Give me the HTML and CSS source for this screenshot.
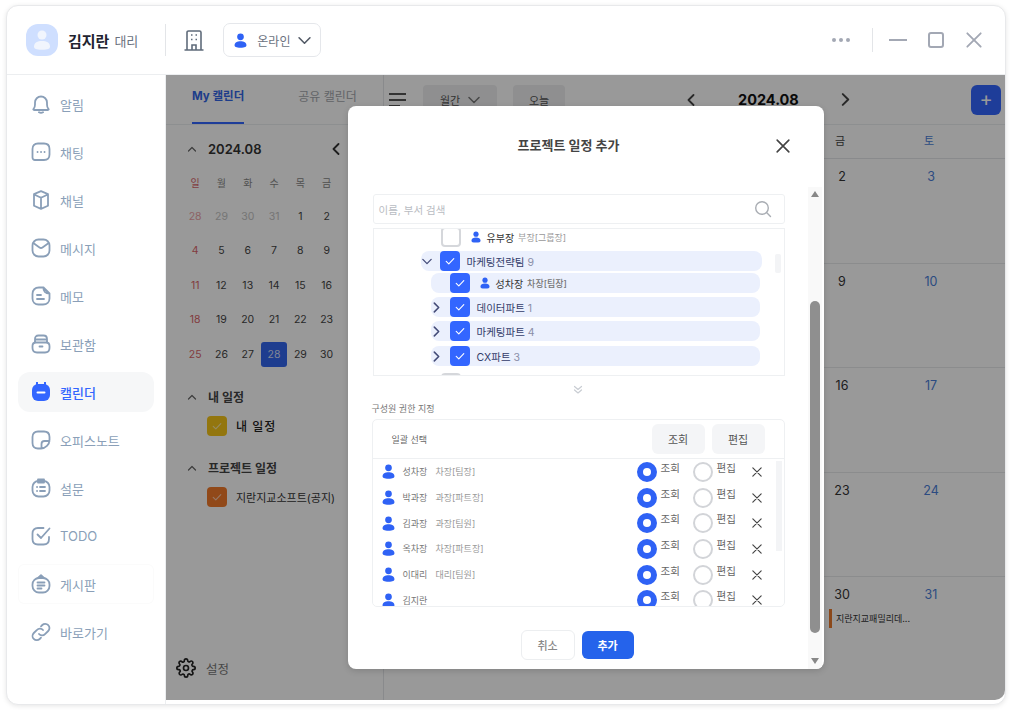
FILE: index.html
```html
<!DOCTYPE html>
<html lang="ko">
<head>
  <meta charset="UTF-8" />
  <title>캘린더</title>
  <link rel="stylesheet" href="styles.css">
</head>
<body>
  <svg class="defs">
    <symbol id="person" viewBox="0 0 14 16"><circle cx="7" cy="4" r="3.6"/><path d="M0.6 13.2C0.6 10.2 3.4 8.8 7 8.8s6.4 1.4 6.4 4.4c0 1.8-1.6 2.6-6.4 2.6S0.6 15 0.6 13.2z"/></symbol>
    <symbol id="check" viewBox="0 0 12 12"><path d="M2.2 6.3l2.6 2.5 5-5.2" fill="none" stroke="currentColor" stroke-width="1.1" stroke-linecap="round" stroke-linejoin="round"/></symbol>
    <symbol id="cross" viewBox="0 0 12 12"><path d="M1 1l10 10M11 1L1 11" fill="none" stroke="currentColor" stroke-width="1.4" stroke-linecap="round"/></symbol>
    <symbol id="down" viewBox="0 0 12 8"><path d="M1 1.5l5 5 5-5" fill="none" stroke="currentColor" stroke-width="1.5" stroke-linecap="round" stroke-linejoin="round"/></symbol>
    <symbol id="right" viewBox="0 0 8 12"><path d="M1.5 1l5 5-5 5" fill="none" stroke="currentColor" stroke-width="1.8" stroke-linecap="round" stroke-linejoin="round"/></symbol>
    <symbol id="left" viewBox="0 0 8 12"><path d="M6.5 1l-5 5 5 5" fill="none" stroke="currentColor" stroke-width="1.8" stroke-linecap="round" stroke-linejoin="round"/></symbol>
    <symbol id="up" viewBox="0 0 10 6"><path d="M1.5 5L5 1.5 8.500 5" fill="none" stroke="currentColor" stroke-width="1.2" stroke-linecap="round" stroke-linejoin="round"/></symbol>
  </svg>

  <div class="window">
    <!-- Top bar -->
    <header class="topbar">
      <div class="avatar">
        <svg width="18" height="20" viewBox="0 0 14 16" class="avatar-person"><use href="#person"/></svg>
      </div>
      <strong class="user-name">김지란</strong>
      <span class="user-rank">대리</span>
      <span class="divider divider-left"></span>
      <svg class="building" width="20" height="21" viewBox="0 0 20 21" fill="none" stroke="#5f6b7a" stroke-width="1.6">
        <path d="M3 20V2.500C3 1.600 3.600 1 4.500 1h11c.9 0 1.500.6 1.500 1.500V20M0.500 20h19"/>
        <path d="M8 20v-5h4v5M7 5h1.500M11.500 5H13M7 9.500h1.500M11.500 9.500H13"/>
      </svg>
      <div class="status">
        <svg class="icon-blue" width="13" height="15"><use href="#person"/></svg>
        <span>온라인</span>
        <svg class="status-caret" width="13" height="9"><use href="#down"/></svg>
      </div>
      <div class="win-controls">
        <span class="dots"><i></i><i></i><i></i></span>
        <span class="divider divider-right"></span>
        <span class="minimize"></span>
        <span class="maximize"></span>
        <svg class="win-close" width="16" height="16"><use href="#cross"/></svg>
      </div>
    </header>

    <div class="layout">
      <!-- Sidebar -->
      <nav class="sidebar">
        <a class="nav-item">
          <svg viewBox="0 0 20 20"><path d="M2.500 15c1.200-1.200 1.500-2.500 1.500-4.500V8.500a6 6 0 0 1 12 0v2c0 2 .3 3.300 1.500 4.500.4.500.1 1-.5 1H3c-.6 0-.9-.5-.5-1zM8 18.300c1.200.7 2.800.7 4 0"/></svg>
          <span>알림</span>
        </a>
        <a class="nav-item">
          <svg viewBox="0 0 20 20"><path d="M7 1.500h6c3.500 0 5.500 2 5.500 5.500v5.500c0 3.500-2 5.500-5.500 5.500H4c-1.500 0-2.500-1-2.500-2.500V7c0-3.500 2-5.500 5.500-5.500z"/><path d="M6.500 10h.1M10 10h.1M13.500 10h.1"/></svg>
          <span>채팅</span>
        </a>
        <a class="nav-item">
          <svg viewBox="0 0 20 20"><path d="M10 1.200l7 3v11.500l-7 3.200-7-3.200V4.200zM3.200 4.500L10 7.700l6.800-3.200M10 7.700v11"/></svg>
          <span>채널</span>
        </a>
        <a class="nav-item">
          <svg viewBox="0 0 20 20"><rect x="1.500" y="1.500" width="17" height="17" rx="6"/><path d="M3 5.500l5.500 4c1 .7 2 .7 3 0l5.500-4"/></svg>
          <span>메시지</span>
        </a>
        <a class="nav-item">
          <svg viewBox="0 0 20 20"><path d="M12.500 1.500H8C4 1.500 1.500 4 1.500 8v4.500c0 3.500 2.500 6 6 6H12c4 0 6.500-2.500 6.500-6V7.500zM12.500 1.500c-.5 3.500 2 6 6 6M6 9h4M6 13h7"/></svg>
          <span>메모</span>
        </a>
        <a class="nav-item">
          <svg viewBox="0 0 20 20"><path d="M4 8.500V5c0-2 1-3.500 3.500-3.500h5C15 1.500 16 3 16 5v3.500M1.500 12c0-2.500 1-3.500 3.500-3.500h10c2.500 0 3.500 1 3.500 3.500v2c0 3-1.500 4.500-4.500 4.500H6c-3 0-4.500-1.500-4.500-4.500zM4 5.500h12M8.500 12.500h3"/></svg>
          <span>보관함</span>
        </a>
        <a class="nav-item active">
          <svg viewBox="0 0 20 20" class="solid"><path d="M6 .6v3M14 .6v3" stroke="#3366ff" fill="none"/><rect x="1" y="2" width="18" height="17" rx="6" stroke="none"/><path d="M6.500 10.500h7" stroke="#fff" fill="none"/></svg>
          <span>캘린더</span>
        </a>
        <a class="nav-item">
          <svg viewBox="0 0 20 20"><path d="M10 18.500H7c-3.500 0-5.500-2-5.500-5.500V7c0-3.500 2-5.500 5.500-5.500h6c3.500 0 5.500 2 5.500 5.500v3c0 4.500-4 8.500-8.500 8.500zM18.500 11H13.500c-2 0-3 1-3 3v4.500"/></svg>
          <span>오피스노트</span>
        </a>
        <a class="nav-item">
          <svg viewBox="0 0 20 20"><rect x="1.500" y="3" width="17" height="15.500" rx="6"/><path d="M7 1.500h6v3H7zM6 9h.1M9 9h5M6 13h.1M9 13h5"/></svg>
          <span>설문</span>
        </a>
        <a class="nav-item">
          <svg viewBox="0 0 20 20"><path d="M12.500 2H7C3.500 2 1.500 4 1.500 7.500V13c0 3.500 2 5.500 5.500 5.500h5.500c3.500 0 5.500-2 5.500-5.500v-2M6.500 8.500l3.500 3.500 8.500-9.500"/></svg>
          <span>TODO</span>
        </a>
        <a class="nav-item outlined">
          <svg viewBox="0 0 20 20"><rect x="1.500" y="4" width="17" height="14.500" rx="6.500"/><path d="M7 4l3-2.800L13 4M6.500 8.500h7M6.500 11.500h7M6.500 14.500h4"/></svg>
          <span>게시판</span>
        </a>
        <a class="nav-item">
          <svg viewBox="0 0 20 20"><path d="M8 12a4 4 0 0 0 6 .2l3.200-3.200A4.200 4.200 0 0 0 11.300 3L10 4.300M12 8a4 4 0 0 0-6-.2L2.800 11A4.200 4.200 0 0 0 8.700 17l1.300-1.300"/></svg>
          <span>바로가기</span>
        </a>
      </nav>

      <div class="content">
        <!-- Mini calendar panel -->
        <aside class="panel">
          <div class="tabs">
            <span class="tab on">My 캘린더</span>
            <span class="tab">공유 캘린더</span>
          </div>
          <div class="mini-head">
            <svg class="caret" width="10" height="6"><use href="#up"/></svg>
            <b>2024.08</b>
            <svg class="mini-prev" width="8" height="12"><use href="#left"/></svg>
          </div>
          <div class="mini-week">
            <span class="sun">일</span><span>월</span><span>화</span><span>수</span><span>목</span><span>금</span>
          </div>
          <div class="mini-grid">
            <span class="sun fade">28</span><span class="fade">29</span><span class="fade">30</span><span class="fade">31</span><span>1</span><span>2</span><span></span>
            <span class="sun">4</span><span>5</span><span>6</span><span>7</span><span>8</span><span>9</span><span></span>
            <span class="sun">11</span><span>12</span><span>13</span><span>14</span><span>15</span><span>16</span><span></span>
            <span class="sun">18</span><span>19</span><span>20</span><span>21</span><span>22</span><span>23</span><span></span>
            <span class="sun">25</span><span>26</span><span>27</span><span class="today">28</span><span>29</span><span>30</span><span></span>
          </div>
          <div class="cal-group group-mine">
            <div class="group-title"><svg class="caret" width="10" height="6"><use href="#up"/></svg>내 일정</div>
            <div class="group-item mine">
              <span class="swatch swatch-yellow"><svg width="12" height="12"><use href="#check"/></svg></span>내 일정
            </div>
          </div>
          <div class="cal-group group-project">
            <div class="group-title"><svg class="caret" width="10" height="6"><use href="#up"/></svg>프로젝트 일정</div>
            <div class="group-item">
              <span class="swatch swatch-orange"><svg width="12" height="12"><use href="#check"/></svg></span>지란지교소프트(공지)
            </div>
          </div>
          <div class="settings">
            <svg width="20" height="20" viewBox="0 0 24 24" fill="none" stroke="#222" stroke-width="2" stroke-linejoin="round"><circle cx="12" cy="12" r="3"/><path d="M19.400 15a1.650 1.650 0 0 0 .33 1.820l.06.06a2 2 0 1 1-2.830 2.830l-.06-.06a1.650 1.650 0 0 0-2.800 1.170V21a2 2 0 1 1-4 0v-.09a1.650 1.650 0 0 0-2.800-1.170l-.06.06a2 2 0 1 1-2.830-2.830l.06-.06A1.650 1.650 0 0 0 3.090 14H3a2 2 0 1 1 0-4h.09a1.650 1.650 0 0 0 1.170-2.800l-.06-.06a2 2 0 1 1 2.830-2.830l.06.06A1.650 1.650 0 0 0 10 3.090V3a2 2 0 1 1 4 0v.09a1.650 1.650 0 0 0 2.800 1.170l.06-.06a2 2 0 1 1 2.830 2.830l-.06.06A1.650 1.650 0 0 0 20.910 10H21a2 2 0 1 1 0 4h-.09a1.650 1.650 0 0 0-1.510 1z"/></svg>
            <span>설정</span>
          </div>
        </aside>

        <!-- Month view: the columns under the dialog stay empty -->
        <main class="month">
          <div class="month-bar">
            <span class="burger"><i></i><i></i><i></i></span>
            <span class="bar-btn btn-view">월간 <svg width="12" height="8"><use href="#down"/></svg></span>
            <span class="bar-btn btn-today">오늘</span>
            <svg class="month-prev" width="8" height="12"><use href="#left"/></svg>
            <b class="month-title">2024.08</b>
            <svg class="month-next" width="9" height="13"><use href="#right"/></svg>
            <span class="add-btn">+</span>
          </div>
          <div class="week-head">
            <span>금</span><span class="sat">토</span>
          </div>
          <div class="weeks">
            <div class="day"><b>2</b></div><div class="day sat"><b>3</b></div>
            <div class="day"><b>9</b></div><div class="day sat"><b>10</b></div>
            <div class="day"><b>16</b></div><div class="day sat"><b>17</b></div>
            <div class="day"><b>23</b></div><div class="day sat"><b>24</b></div>
            <div class="day"><b>30</b><div class="event">지란지교패밀리데...</div></div>
            <div class="day sat"><b>31</b></div>
          </div>
        </main>

        <!-- Dialog -->
        <div class="overlay">
          <div class="modal">
            <div class="modal-main">
              <div class="modal-head">
                <h2>프로젝트 일정 추가</h2>
                <svg class="modal-close" width="14" height="14"><use href="#cross"/></svg>
              </div>
              <div class="modal-body">
                <div class="search">
                  <span>이름, 부서 검색</span>
                  <svg width="18" height="18" viewBox="0 0 18 18" fill="none" stroke="#a9adb3" stroke-width="1.4" stroke-linecap="round"><circle cx="8" cy="8" r="6.300"/><path d="M12.800 12.800L16.500 16.500"/></svg>
                </div>

                <div class="tree">
                  <div class="tree-row first">
                    <span class="cb off"></span>
                    <svg class="icon-blue tree-person" width="10" height="12"><use href="#person"/></svg>
                    <span class="t-name">유부장</span><span class="t-role">부장[그룹장]</span>
                  </div>
                  <div class="tree-row lv1 on">
                    <svg class="chev-down" width="10" height="7"><use href="#down"/></svg>
                    <span class="cb"><svg width="12" height="12"><use href="#check"/></svg></span>
                    <span class="t-team">마케팅전략팀 <em>9</em></span>
                  </div>
                  <div class="tree-row lv2 on tight">
                    <span class="chev-slot"></span>
                    <span class="cb"><svg width="12" height="12"><use href="#check"/></svg></span>
                    <svg class="icon-blue tree-person" width="10" height="12"><use href="#person"/></svg>
                    <span class="t-name">성차장</span><span class="t-role strong">차장[팀장]</span>
                  </div>
                  <div class="tree-row lv2 on">
                    <svg class="chev-right" width="7" height="11"><use href="#right"/></svg>
                    <span class="cb"><svg width="12" height="12"><use href="#check"/></svg></span>
                    <span class="t-team">데이터파트 <em>1</em></span>
                  </div>
                  <div class="tree-row lv2 on">
                    <svg class="chev-right" width="7" height="11"><use href="#right"/></svg>
                    <span class="cb"><svg width="12" height="12"><use href="#check"/></svg></span>
                    <span class="t-team">마케팅파트 <em>4</em></span>
                  </div>
                  <div class="tree-row lv2 on last">
                    <svg class="chev-right" width="7" height="11"><use href="#right"/></svg>
                    <span class="cb"><svg width="12" height="12"><use href="#check"/></svg></span>
                    <span class="t-team">CX파트 <em>3</em></span>
                  </div>
                  <div class="tree-row next"><span class="cb off"></span></div>
                  <span class="tree-scroll"></span>
                </div>

                <div class="more">
                  <svg width="10" height="10" viewBox="0 0 10 10" fill="none" stroke="#c9cdd3" stroke-width="1.2" stroke-linecap="round" stroke-linejoin="round"><path d="M1.500 1.500L5 4.500l3.500-3M1.500 5L5 8l3.500-3"/></svg>
                </div>

                <div class="perm-label">구성원 권한 지정</div>
                <div class="perm">
                  <div class="perm-head">
                    <span>일괄 선택</span>
                    <button class="perm-btn">조회</button>
                    <button class="perm-btn">편집</button>
                  </div>
                  <div class="perm-list">
                    <div class="perm-row">
                      <svg class="icon-blue" width="13" height="15"><use href="#person"/></svg>
                      <span class="p-name">성차장</span><span class="p-role">차장[팀장]</span>
                      <span class="opt"><i class="radio on"></i>조회</span>
                      <span class="opt"><i class="radio"></i>편집</span>
                      <svg class="p-del" width="10" height="10"><use href="#cross"/></svg>
                    </div>
                    <div class="perm-row">
                      <svg class="icon-blue" width="13" height="15"><use href="#person"/></svg>
                      <span class="p-name">박과장</span><span class="p-role">과장[파트장]</span>
                      <span class="opt"><i class="radio on"></i>조회</span>
                      <span class="opt"><i class="radio"></i>편집</span>
                      <svg class="p-del" width="10" height="10"><use href="#cross"/></svg>
                    </div>
                    <div class="perm-row">
                      <svg class="icon-blue" width="13" height="15"><use href="#person"/></svg>
                      <span class="p-name">김과장</span><span class="p-role">과장[팀원]</span>
                      <span class="opt"><i class="radio on"></i>조회</span>
                      <span class="opt"><i class="radio"></i>편집</span>
                      <svg class="p-del" width="10" height="10"><use href="#cross"/></svg>
                    </div>
                    <div class="perm-row">
                      <svg class="icon-blue" width="13" height="15"><use href="#person"/></svg>
                      <span class="p-name">옥차장</span><span class="p-role">차장[파트장]</span>
                      <span class="opt"><i class="radio on"></i>조회</span>
                      <span class="opt"><i class="radio"></i>편집</span>
                      <svg class="p-del" width="10" height="10"><use href="#cross"/></svg>
                    </div>
                    <div class="perm-row">
                      <svg class="icon-blue" width="13" height="15"><use href="#person"/></svg>
                      <span class="p-name">이대리</span><span class="p-role">대리[팀원]</span>
                      <span class="opt"><i class="radio on"></i>조회</span>
                      <span class="opt"><i class="radio"></i>편집</span>
                      <svg class="p-del" width="10" height="10"><use href="#cross"/></svg>
                    </div>
                    <div class="perm-row">
                      <svg class="icon-blue" width="13" height="15"><use href="#person"/></svg>
                      <span class="p-name">김지란</span><span class="p-role"></span>
                      <span class="opt"><i class="radio on"></i>조회</span>
                      <span class="opt"><i class="radio"></i>편집</span>
                      <svg class="p-del" width="10" height="10"><use href="#cross"/></svg>
                    </div>
                    <span class="perm-scroll"></span>
                  </div>
                </div>

                <div class="modal-foot">
                  <button class="btn-cancel">취소</button>
                  <button class="btn-add">추가</button>
                </div>
              </div>
            </div>
            <div class="modal-scroll">
              <span class="arrow-up"></span>
              <span class="thumb"></span>
              <span class="arrow-down"></span>
            </div>
          </div>
        </div>
      </div>
    </div>
  </div>
</body>
</html>
```

FILE: styles.css
```css
* { box-sizing: border-box; }
html, body { margin: 0; height: 100%; }
body {
  background: #fff;
  font-family: Inter, "Noto Sans CJK KR", sans-serif;
  color: #222;
  overflow: hidden;
}
.defs { display: none; }
.icon-blue { fill: #2f62f5; flex: none; }

.window {
  width: 1000px;
  height: 700px;
  margin: 5px 0 0 6px;
  border: 1px solid #e8e9eb;
  border-radius: 12px;
  box-shadow: 0 1px 5px rgba(0, 0, 0, .1);
  background: #fff;
  overflow: hidden;
  display: flex;
  flex-direction: column;
}

/* Top bar */
.topbar {
  height: 69px;
  flex: none;
  display: flex;
  align-items: center;
  padding-left: 19px;
  border-bottom: 1px solid #eceef0;
}
.avatar {
  width: 32px;
  height: 32px;
  border-radius: 12px;
  background: #cfdfff;
  display: flex;
  align-items: center;
  justify-content: center;
}
.avatar-person { fill: #f1f5fd; }
.user-name { margin-left: 10px; font-size: 15px; font-weight: 700; color: #1f2430; }
.user-rank { margin-left: 5px; font-size: 13px; color: #6b7280; }
.divider { width: 1px; background: #e3e5e8; flex: none; }
.divider-left { height: 32px; margin-left: 27px; }
.building { margin-left: 18px; flex: none; }
.status {
  margin-left: 19px;
  width: 98px;
  height: 34px;
  border: 1px solid #e5e7eb;
  border-radius: 7px;
  display: flex;
  align-items: center;
  padding-left: 10px;
  font-size: 12px;
  color: #6b7280;
}
.status span { margin-left: 10px; }
.status-caret { margin-left: 8px; color: #555c68; }
.win-controls { margin-left: auto; display: flex; align-items: center; padding-right: 23px; }
.dots { display: flex; gap: 3px; }
.dots i { width: 4px; height: 4px; border-radius: 50%; background: #a3a8b4; }
.divider-right { height: 24px; margin-left: 22px; }
.minimize { width: 18px; height: 2px; background: #a3a8b4; margin-left: 16px; }
.maximize { width: 16px; height: 16px; border: 2px solid #a3a8b4; border-radius: 3px; margin-left: 21px; }
.win-close { margin-left: 22px; color: #a3a8b4; }

.layout { flex: 1; display: flex; min-height: 0; }

/* Sidebar */
.sidebar {
  width: 159px;
  flex: none;
  padding: 9px 11px 0 11px;
  border-right: 1px solid #eceef0;
  display: flex;
  flex-direction: column;
  gap: 8px;
}
.nav-item {
  height: 40px;
  display: flex;
  align-items: center;
  gap: 9px;
  padding-left: 13px;
  border-radius: 12px;
  font-size: 13px;
  color: #8a9fb8;
}
.nav-item svg {
  width: 20px;
  height: 20px;
  fill: none;
  stroke: #8a9fb8;
  stroke-width: 1.800;
  stroke-linecap: round;
  stroke-linejoin: round;
}
.nav-item.active { background: #f6f7f8; color: #3366ff; font-weight: 500; }
.nav-item svg.solid { fill: #3366ff; stroke-width: 2; }
.nav-item.outlined { box-shadow: inset 0 0 0 1px #fbfbfb; border-radius: 6px; }

.content { flex: 1; position: relative; display: flex; margin-bottom: 4px; border-bottom-right-radius: 10px; overflow: hidden; }

/* Left panel */
.panel {
  width: 218px;
  flex: none;
  border-right: 1px solid #e4e6e9;
  display: flex;
  flex-direction: column;
}
.tabs { height: 50px; flex: none; display: flex; padding-left: 26px; gap: 54px; border-bottom: 1px solid #eceef0; }
.tab { height: 49px; line-height: 43px; font-size: 12px; color: #a4a8ae; white-space: nowrap; }
.tab.on { font-size: 11.500px; color: #3366e6; font-weight: 700; border-bottom: 2px solid #3366ff; }
.mini-head { display: flex; align-items: center; height: 20px; margin-top: 14px; padding-left: 21px; }
.mini-head b { margin-left: 11px; font-size: 13px; font-weight: 600; color: #333; }
.caret { color: #666; }
.mini-prev { margin-left: 71px; color: #333; }
.mini-week, .mini-grid {
  display: grid;
  grid-template-columns: repeat(7, 26.300px);
  margin-left: 16px;
  text-align: center;
}
.mini-week { height: 40px; padding-top: 14px; font-size: 10px; line-height: 20px; color: #888; }
.mini-grid { grid-auto-rows: 34.500px; font-size: 10.500px; color: #444; align-items: center; }
.mini-grid .fade { color: #c4c4c4; }
.sun { color: #d9646a; }
.mini-grid .sun.fade { color: #eba4a8; }
.mini-grid .today { height: 25px; line-height: 25px; border-radius: 3px; background: #3366ee; color: #d6dff8; }
.cal-group { padding-left: 21px; }
.group-mine { margin-top: 16px; }
.group-project { margin-top: 23px; }
.group-title { display: flex; align-items: center; gap: 11px; height: 18px; font-size: 12px; font-weight: 700; color: #444; }
.group-item { display: flex; align-items: center; gap: 9px; margin-top: 10px; margin-left: 20px; font-size: 11px; color: #333; white-space: nowrap; }
.group-item.mine { font-size: 12px; font-weight: 500; letter-spacing: 1px; color: #222; }
.swatch { width: 20px; height: 20px; border-radius: 4px; display: flex; align-items: center; justify-content: center; color: #fff; flex: none; }
.swatch svg { opacity: .6; }
.swatch-yellow { background: #f5c518; }
.swatch-orange { background: #f27a2a; }
.settings { margin-top: auto; margin-bottom: 22px; margin-left: 10px; display: flex; align-items: center; gap: 10px; font-size: 12.500px; color: #777; }

/* Month view */
.month { flex: 1; min-width: 0; overflow: hidden; }
.month-bar { height: 50px; display: flex; align-items: center; padding-left: 5px; border-bottom: 1px solid #eceef0; }
.burger { display: flex; flex-direction: column; gap: 4px; width: 17px; }
.burger i { height: 2px; background: #555; }
.burger i:last-child { width: 11px; }
.bar-btn { height: 30px; background: #eeeff1; border-radius: 4px; display: flex; align-items: center; justify-content: center; gap: 8px; font-size: 11px; color: #555; }
.bar-btn svg { color: #777; }
.btn-view { width: 74px; margin-left: 17px; }
.btn-today { width: 52px; margin-left: 16px; }
.month-prev { margin-left: 122px; color: #444; }
.month-title { margin-left: 43px; font-size: 14.500px; font-weight: 700; color: #111; }
.month-next { margin-left: 42px; color: #444; }
.add-btn {
  margin-left: auto;
  margin-right: 4px;
  width: 30px;
  height: 30px;
  border-radius: 6px;
  background: #3366ff;
  color: #fff;
  font-size: 20px;
  line-height: 28px;
  text-align: center;
}
.week-head, .weeks {
  display: grid;
  grid-template-columns: repeat(2, 89px);
  justify-content: end;
  margin-right: -2px;
}
.week-head { height: 34px; border-bottom: 1px solid #e4e6e9; font-size: 11px; line-height: 33px; color: #444; }
.week-head span { padding-left: 6px; }
.week-head .sat, .day.sat b { color: #4a7ed8; }
.weeks { grid-auto-rows: 104.500px; position: relative; }
/* row lines run the full width, under the dialog too */
.weeks { background: repeating-linear-gradient(to bottom, transparent 0, transparent 103.500px, #e8e9eb 103.500px, #e8e9eb 104.500px) 0 0 / 100% 418px no-repeat; }
.day { padding-top: 10px; font-size: 12.500px; }
.day b { display: block; width: 16px; margin-left: 5px; font-weight: 400; line-height: 16px; text-align: center; color: #333; }
.event {
  height: 19px;
  margin-top: 6px;
  padding-left: 4px;
  border-left: 3px solid #e8792c;
  font-size: 9px;
  line-height: 19px;
  color: #333;
  white-space: nowrap;
}

/* Dialog */
.overlay {
  position: absolute;
  inset: 0;
  background: rgba(0, 0, 0, .4);
  display: flex;
  align-items: center;
  justify-content: center;
}
.modal {
  width: 476px;
  height: 563px;
  background: #fff;
  border-radius: 8px;
  box-shadow: 0 2px 6px rgba(0, 0, 0, .15);
  display: flex;
  overflow: hidden;
}
.modal-main { width: 460px; flex: none; }
.modal-head { height: 88px; display: flex; align-items: flex-start; padding: 30px 18px 0 170px; }
.modal-head h2 { margin: 0; font-size: 13px; line-height: 18px; font-weight: 700; color: #444; }
.modal-close { margin-left: auto; margin-top: 3px; color: #444; }
.modal-body { padding: 0 23px 0 25px; }
.search {
  height: 30px;
  border: 1px solid #eef0f2;
  border-radius: 3px;
  display: flex;
  align-items: center;
  justify-content: space-between;
  padding: 0 12px 0 5px;
  font-size: 10.500px;
  color: #b9bcc2;
}
.tree {
  position: relative;
  height: 148px;
  margin-top: 4px;
  border: 1px solid #eef0f2;
  overflow: hidden;
  font-size: 10.500px;
  color: #333;
}
.tree-row { height: 20px; display: flex; align-items: center; border-radius: 8px; margin-top: 4px; }
.tree-row.first { margin-top: -2px; margin-left: 67px; }
.tree-row.lv1 { margin: 4px 22px 0 47px; }
.tree-row.lv2 { margin: 4px 24px 0 57px; }
.tree-row.lv2.tight { margin-top: 2px; }
.tree-row.lv2.last { margin-top: 5px; }
.tree-row.next { margin: 7px 0 0 67px; }
.tree-row.on { background: #ebf0fd; }
.cb {
  width: 20px;
  height: 20px;
  flex: none;
  border-radius: 4px;
  background: #3366ff;
  color: #fff;
  display: flex;
  align-items: center;
  justify-content: center;
}
.cb.off { background: #fff; border: 2px solid #d5d7db; }
.chev-down { margin: 0 8px 0 1px; color: #444c78; flex: none; }
.chev-right { margin: 0 10px 0 2px; color: #444c78; flex: none; }
.chev-slot { width: 19px; flex: none; }
.tree-person { margin-left: 10px; }
.t-name { margin-left: 6px; font-size: 10px; color: #333; }
.t-role { margin-left: 4px; font-size: 9px; color: #999; }
.t-role.strong { color: #777; font-weight: 500; }
.t-team { margin-left: 7px; color: #333c6a; white-space: nowrap; }
.t-team em { font-style: normal; color: #8a8ea8; }
.tree-scroll { position: absolute; left: 401px; top: 25px; width: 6px; height: 19px; background: #f3f4f6; border-radius: 2px; }
.more { height: 24px; display: flex; align-items: center; justify-content: center; padding-right: 2px; padding-top: 3px; }
.perm-label { height: 19px; margin-left: -1px; font-size: 9px; line-height: 18px; color: #777; }
.perm { height: 188px; margin-left: -1px; border: 1px solid #eef0f2; border-radius: 5px; overflow: hidden; }
.perm-head { height: 39px; display: flex; align-items: center; gap: 7px; padding: 0 19px 0 19px; border-bottom: 1px solid #eef0f2; font-size: 9px; color: #666; }
.perm-head span { margin-right: auto; }
.perm-btn { width: 53px; height: 30px; border: 0; border-radius: 6px; background: #f4f5f7; font-family: inherit; font-size: 11px; color: #555; padding: 0; }
.perm-list { position: relative; }
.perm-row { height: 25.700px; display: flex; align-items: center; padding-left: 9px; font-size: 9px; }
.p-name { width: 33px; margin-left: 8px; color: #777; flex: none; }
.p-role { width: 201px; color: #999; flex: none; }
/* label sits 3px above the middle of its radio */
.opt { width: 56px; flex: none; display: flex; align-items: center; gap: 4px; padding-bottom: 6px; font-size: 10.500px; color: #666; line-height: 14px; }
.radio { width: 20px; height: 20px; flex: none; margin-top: 6px; border-radius: 50%; border: 2px solid #d2d4d8; }
.radio.on { border: 6px solid #2f62f5; }
.p-del { margin-left: 3px; color: #444; flex: none; }
.perm-scroll { position: absolute; left: 403px; top: 2px; width: 6px; height: 90px; background: #f3f4f6; }
.modal-foot { margin-top: 23px; display: flex; align-items: center; gap: 7px; padding-left: 148px; }
.btn-cancel, .btn-add { height: 30px; border-radius: 6px; font-family: inherit; font-size: 11px; font-weight: 500; padding: 0; }
.btn-cancel { width: 54px; border: 1px solid #eceef0; background: #fff; color: #888; }
.btn-add { width: 52px; height: 28px; border: 0; background: #2563eb; color: #fff; font-weight: 700; }
.modal-scroll {
  width: 14px;
  margin-top: 81px;
  background: #f9f9f9;
  display: flex;
  flex-direction: column;
  align-items: center;
  padding: 4px 0 5px;
}
.arrow-up { border: 4.500px solid transparent; border-top: 0; border-bottom: 6px solid #888; }
.thumb { width: 10px; height: 332px; margin-top: 104px; background: #8f8f8f; border-radius: 5px; flex: none; }
.arrow-down { margin-top: auto; border: 4.500px solid transparent; border-bottom: 0; border-top: 6px solid #888; }
```
